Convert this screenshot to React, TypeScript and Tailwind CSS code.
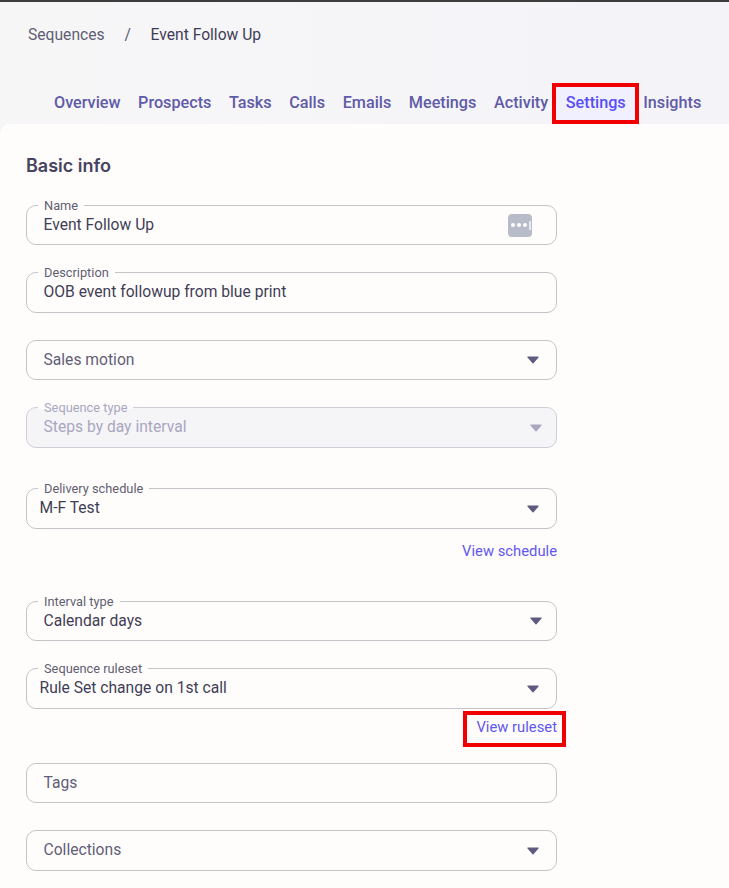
import React from "react";

function Caret({ color = "#5f5b80" }: { color?: string }) {
  return (
    <svg width="12" height="8" viewBox="0 0 12 8" className="shrink-0">
      <path d="M1 .4h10a.7.7 0 0 1 .5 1.2L6.5 7.3a.7.7 0 0 1-1 0L.5 1.6A.7.7 0 0 1 1 .4z" fill={color} />
    </svg>
  );
}

function Field({
  label,
  value,
  placeholder,
  caret,
  disabled,
  tight,
  far,
  h = "h-[41px]",
  className = "",
  children,
}: {
  label?: string;
  value?: string;
  placeholder?: string;
  caret?: boolean;
  disabled?: boolean;
  tight?: boolean;
  far?: boolean;
  h?: string;
  className?: string;
  children?: React.ReactNode;
}) {
  return (
    <div
      className={`relative flex w-[531px] items-center rounded-[10px] border ${h} ${className} ${
        disabled ? "border-[#cfcdd8] bg-[#f5f5f7]" : "border-[#c4c3c7] bg-[#fffdfb]"
      } ${tight ? "pl-[12.5px]" : "pl-[16.5px]"} ${far ? "pr-[14px]" : "pr-[17px]"}`}
    >
      {label && (
        <span
          className={`absolute left-[11px] top-[-8px] px-[6px] text-[12.8px] leading-[15px] ${
            disabled ? "text-[#a9a6c0]" : "text-[#5f5d73]"
          } bg-[linear-gradient(to_bottom,#fffdfb_60%,transparent_60%)]`}
        >
          {label}
        </span>
      )}
      <span
        className={`flex-1 text-[15.65px] leading-[20px] ${label || h === "h-[41px]" ? "mt-[-1px]" : ""} ${
          disabled ? "text-[#a9a6c0]" : placeholder ? "text-[#5f5d78]" : "text-[#3f3d56]"
        }`}
      >
        {value ?? placeholder}
      </span>
      {caret && <Caret color={disabled ? "#a9a6c0" : "#5f5b80"} />}
      {children}
    </div>
  );
}

const tabs = ["Overview", "Prospects", "Tasks", "Calls", "Emails", "Meetings", "Activity", "Settings", "Insights"];

export default function App() {
  return (
    <div className="h-[888px] w-[729px] overflow-hidden border-t-2 border-[#3c3c3c] bg-gradient-to-r from-[#f7f6f7] to-[#f4f3f8] font-['Roboto',sans-serif]">
      <div className="flex h-[122px] flex-col pl-[28px]">
        <div className="mt-[23px] flex text-[15.65px] leading-[20px]">
          <span className="text-[#5f5d73]">Sequences</span>
          <span className="ml-[20px] text-[#5f5d73]">/</span>
          <span className="ml-[19.5px] text-[#3f3d56]">Event Follow Up</span>
        </div>
        <div className="mt-[48px] ml-[26px] flex gap-[17.6px] text-[16.2px] font-medium leading-[20px]">
          {tabs.map((t) =>
            t === "Settings" ? (
              <span key={t} className="relative text-[#5a4ff5]">
                <span className="absolute -left-[14px] -right-[13px] -top-[10px] -bottom-[11px] border-4 border-[#f00000] bg-[#f0f0fe]" />
                <span className="relative">{t}</span>
              </span>
            ) : (
              <span key={t} className="text-[#5f5ba8]">
                {t}
              </span>
            )
          )}
        </div>
      </div>
      <div className="h-[764px] rounded-tl-[10px] bg-[#fffdfb] pl-[26px] pt-[32px]">
        <h2 className="mb-[29px] font-['Inter',sans-serif] text-[18px] font-semibold leading-[20px] text-[#46435f]">Basic info</h2>
        <Field label="Name" value="Event Follow Up" h="h-[40px]">
          <span className="ml-auto mr-[7px] flex h-[23px] w-[24px] items-center gap-[2.5px] rounded-[4px] bg-[#b7bcc8] pl-[3px]">
            <span className="h-[3.5px] w-[3.5px] rounded-full bg-white" />
            <span className="h-[3.5px] w-[3.5px] rounded-full bg-white" />
            <span className="h-[3.5px] w-[3.5px] rounded-full bg-white" />
            <span className="h-[9px] w-[2px] bg-[#e8eaef]" />
          </span>
        </Field>
        <Field label="Description" value="OOB event followup from blue print" className="mt-[27px]" />
        <Field placeholder="Sales motion" caret h="h-[40px]" className="mt-[27px]" />
        <Field label="Sequence type" value="Steps by day interval" caret far disabled className="mt-[27px]" />
        <Field label="Delivery schedule" value="M-F Test" caret tight className="mt-[40px]" />
        <div className="mt-[13px] w-[531px] text-right text-[14.8px] leading-[18px] text-[#5f57f0]">View schedule</div>
        <Field label="Interval type" value="Calendar days" caret far h="h-[40px]" className="mt-[41px]" />
        <Field label="Sequence ruleset" value="Rule Set change on 1st call" caret tight className="mt-[27px]" />
        <div className="mt-[9px] flex w-[531px] justify-end">
          <span className="relative text-[14.8px] leading-[18px] text-[#5f57f0]">
            <span className="absolute -left-[13px] -right-[9px] -top-[7px] -bottom-[11px] border-4 border-[#f00000]" />
            View ruleset
          </span>
        </div>
        <Field placeholder="Tags" h="h-[40px]" className="mt-[27px]" />
        <Field placeholder="Collections" caret className="mt-[27px]" />
      </div>
    </div>
  );
}
